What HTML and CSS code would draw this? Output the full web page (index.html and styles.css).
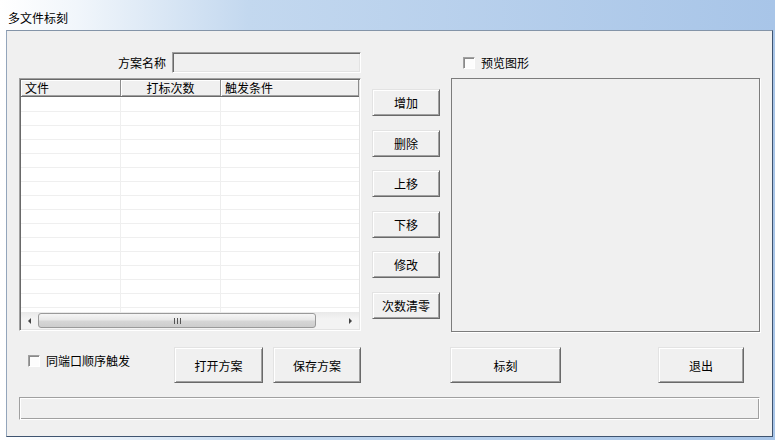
FILE: index.html
```html
<!DOCTYPE html>
<html lang="zh-CN">
<head>
    <meta charset="UTF-8">
    <meta name="viewport" content="width=device-width, initial-scale=1.0">
    <title>多文件标刻</title>
    <link rel="stylesheet" href="styles.css">
</head>
<body>
    <div class="window">
        <div class="titlebar">多文件标刻</div>
        <div class="client">
            <div class="layout">
                <div class="name-row">
                    <span>方案名称</span>
                    <span class="edit"></span>
                </div>
                <div></div>
                <label class="check-row preview-check"><span class="checkbox"></span>预览图形</label>

                <div class="listview">
                    <div class="list-header">
                        <span class="col1">文件</span>
                        <span class="col2 center">打标次数</span>
                        <span class="col3">触发条件</span>
                    </div>
                    <div class="list-rows">
                        <div class="row"><span class="col1"></span><span class="col2"></span><span class="col3"></span></div>
                        <div class="row"><span class="col1"></span><span class="col2"></span><span class="col3"></span></div>
                        <div class="row"><span class="col1"></span><span class="col2"></span><span class="col3"></span></div>
                        <div class="row"><span class="col1"></span><span class="col2"></span><span class="col3"></span></div>
                        <div class="row"><span class="col1"></span><span class="col2"></span><span class="col3"></span></div>
                        <div class="row"><span class="col1"></span><span class="col2"></span><span class="col3"></span></div>
                        <div class="row"><span class="col1"></span><span class="col2"></span><span class="col3"></span></div>
                        <div class="row"><span class="col1"></span><span class="col2"></span><span class="col3"></span></div>
                        <div class="row"><span class="col1"></span><span class="col2"></span><span class="col3"></span></div>
                        <div class="row"><span class="col1"></span><span class="col2"></span><span class="col3"></span></div>
                        <div class="row"><span class="col1"></span><span class="col2"></span><span class="col3"></span></div>
                        <div class="row"><span class="col1"></span><span class="col2"></span><span class="col3"></span></div>
                        <div class="row"><span class="col1"></span><span class="col2"></span><span class="col3"></span></div>
                        <div class="row"><span class="col1"></span><span class="col2"></span><span class="col3"></span></div>
                        <div class="row"><span class="col1"></span><span class="col2"></span><span class="col3"></span></div>
                        <div class="row"><span class="col1"></span><span class="col2"></span><span class="col3"></span></div>
                    </div>
                    <div class="hscroll">
                        <span class="arrow"><span class="tri-left"></span></span>
                        <span class="track"><span class="thumb"><span class="grip"></span></span></span>
                        <span class="arrow"><span class="tri-right"></span></span>
                    </div>
                </div>

                <div class="btn-col">
                    <button class="btn">增加</button>
                    <button class="btn">删除</button>
                    <button class="btn">上移</button>
                    <button class="btn">下移</button>
                    <button class="btn">修改</button>
                    <button class="btn">次数清零</button>
                </div>

                <div class="preview"></div>

                <div class="bottom-left">
                    <label class="check-row sync-check"><span class="checkbox"></span>同端口顺序触发</label>
                    <button class="btn btn-open">打开方案</button>
                    <button class="btn btn-save">保存方案</button>
                </div>
                <div></div>
                <div class="bottom-right">
                    <button class="btn btn-mark">标刻</button>
                    <button class="btn btn-exit">退出</button>
                </div>

                <div class="status"></div>
            </div>
        </div>
    </div>
</body>
</html>
```

FILE: styles.css
```css
body {
    margin: 0;
    padding: 0;
    width: 775px;
    height: 440px;
    overflow: hidden;
    font-family: "Noto Sans CJK SC", "DejaVu Sans", sans-serif;
    font-size: 12px;
    color: #000;
}

.window {
    height: 440px;
    background: linear-gradient(to right, #ffffff 0%, #f1f6fb 10%, #c3d8ef 32%, #a8c5e8 100%);
}

.titlebar {
    height: 30px;
    box-sizing: border-box;
    padding: 9px 0 0 8px;
    line-height: 17px;
}

.client {
    height: 407px;
    margin: 0 2px 0 6px;
    box-sizing: border-box;
    background: #f0f0f0;
    border: 1px solid;
    border-color: #8494a8 #3f5470 #3f5470 #93a5bb;
    padding: 21px 0 0 12px;
}

.layout {
    display: grid;
    grid-template-columns: 342px 68px 309px;
    column-gap: 11px;
}

.name-row {
    height: 21px;
    display: flex;
    justify-content: flex-end;
    align-items: center;
    gap: 6px;
}

.edit {
    width: 189px;
    height: 21px;
    box-sizing: border-box;
    border: 1px solid;
    border-color: #a0a0a0 #fff #fff #a0a0a0;
    box-shadow: inset 1px 1px #696969, inset -1px -1px #e3e3e3;
    background: #f0f0f0;
}

.check-row {
    display: flex;
    align-items: center;
    gap: 6px;
    height: 21px;
    line-height: 17px;
}

.checkbox {
    width: 12px;
    height: 12px;
    box-sizing: border-box;
    border: 1px solid;
    border-color: #a0a0a0 #fff #fff #a0a0a0;
    box-shadow: inset 1px 1px #8a8a8a;
    background: #fdfdfd;
}

.preview-check {
    padding-left: 12px;
}

/* list control */
.listview {
    margin-top: 5px;
    height: 253px;
    box-sizing: border-box;
    border: 1px solid;
    border-color: #a0a0a0 #fff #fff #a0a0a0;
    box-shadow: inset 1px 1px #696969, inset -1px -1px #e3e3e3;
    padding: 1px;
    display: flex;
    flex-direction: column;
    background: #fff;
}

.list-header {
    display: flex;
    height: 17px;
    box-sizing: border-box;
    border-bottom: 1px solid #696969;
    line-height: 15px;
    background: #f0f0f0;
}

.list-header span {
    box-sizing: border-box;
    padding-left: 4px;
    border-right: 1px solid #8c8c8c;
    box-shadow: inset 1px 1px #fff, inset 0 -1px #a0a0a0;
}

.list-header .center {
    text-align: center;
    padding-left: 0;
}

.col1 {
    width: 100px;
}

.col2 {
    width: 100px;
}

.col3 {
    flex: 1;
}

.list-rows {
    flex: 1;
    overflow: hidden;
    padding-top: 1px;
}

.row {
    display: flex;
    height: 14px;
    box-sizing: border-box;
    border-bottom: 1px solid #efefef;
}

.row span {
    box-sizing: border-box;
    border-right: 1px solid #efefef;
}

.row .col3 {
    border-right: none;
}

.hscroll {
    height: 17px;
    display: flex;
    background: linear-gradient(#e9e9e9, #f3f3f3 40%, #f3f3f3);
}

.arrow {
    width: 17px;
    display: flex;
    align-items: center;
    justify-content: center;
}

.tri-left {
    border-top: 3px solid transparent;
    border-bottom: 3px solid transparent;
    border-right: 3px solid #444;
}

.tri-right {
    border-top: 3px solid transparent;
    border-bottom: 3px solid transparent;
    border-left: 3px solid #444;
}

.track {
    flex: 1;
    display: flex;
    align-items: center;
}

.thumb {
    width: 278px;
    height: 15px;
    box-sizing: border-box;
    border: 1px solid #9a9a9a;
    border-radius: 3px;
    background: linear-gradient(#f6f6f6, #e8e8e8 45%, #d6d6d6 55%, #cdcdcd);
    display: flex;
    align-items: center;
    justify-content: center;
}

.grip {
    width: 7px;
    height: 6px;
    background: repeating-linear-gradient(to right, #555 0 1px, transparent 1px 3px);
}

/* buttons */
.btn {
    font: inherit;
    color: #000;
    background: #f0f0f0;
    border: 1px solid;
    border-color: #e3e3e3 #696969 #696969 #e3e3e3;
    box-shadow: inset 1px 1px #fff, inset -1px -1px #a0a0a0;
    padding: 0;
    line-height: 17px;
}

.btn-col {
    margin-top: 16px;
    display: flex;
    flex-direction: column;
    gap: 13.5px;
}

.btn-col .btn {
    height: 27px;
}

.preview {
    margin-top: 5px;
    height: 254px;
    box-sizing: border-box;
    border: 1px solid #7c7c7c;
    box-shadow: 1px 1px #fff;
}

.bottom-left,
.bottom-right {
    margin-top: 15px;
    height: 36px;
    display: flex;
    align-items: flex-start;
}

.sync-check {
    margin-top: 3px;
    padding-left: 9px;
    margin-right: auto;
}

.btn-open {
    width: 89px;
    height: 36px;
    margin-right: 10px;
}

.btn-save {
    width: 88px;
    height: 36px;
}

.bottom-right {
    justify-content: space-between;
    margin-left: -1px;
    padding-right: 16px;
}

.btn-mark {
    width: 111px;
    height: 36px;
}

.btn-exit {
    width: 86px;
    height: 36px;
}

.status {
    grid-column: 1 / 4;
    margin-top: 14px;
    height: 23px;
    box-sizing: border-box;
    border: 1px solid;
    border-color: #a0a0a0 #fff #fff #a0a0a0;
    box-shadow: inset 1px 1px #fff, inset -1px -1px #a0a0a0;
}
```
